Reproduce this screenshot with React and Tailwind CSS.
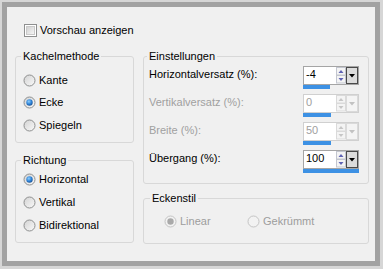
import React from "react";

function Checkbox() {
  return (
    <svg width="13" height="13" viewBox="0 0 13 13">
      <defs>
        <linearGradient id="cbg" x1="0" y1="0" x2="1" y2="1">
          <stop offset="0" stopColor="#cfcfcf" />
          <stop offset="1" stopColor="#f7f7f7" />
        </linearGradient>
      </defs>
      <rect x="0.5" y="0.5" width="12" height="12" fill="#fff" stroke="#8e8f8f" />
      <rect x="2.5" y="2.5" width="8" height="8" fill="url(#cbg)" stroke="#c9c9c9" />
    </svg>
  );
}

function Radio({ checked, disabled }) {
  return (
    <svg width="13" height="13" viewBox="0 0 13 13" className="shrink-0">
      <defs>
        <linearGradient id="rbg" x1="0" y1="0" x2="1" y2="1">
          <stop offset="0" stopColor="#d2d2d2" />
          <stop offset="1" stopColor="#fafafa" />
        </linearGradient>
        <radialGradient id="rdot" cx="0.4" cy="0.35" r="0.7">
          <stop offset="0" stopColor="#8fd0ff" />
          <stop offset="0.6" stopColor="#2a7fd4" />
          <stop offset="1" stopColor="#1c4f8e" />
        </radialGradient>
      </defs>
      <circle
        cx="6.5"
        cy="6.5"
        r="5.5"
        fill={disabled ? "#f2f2f2" : "url(#rbg)"}
        stroke={disabled ? "#c4c4c4" : "#8e8f8f"}
      />
      {checked && (
        <circle cx="6.5" cy="6.5" r="3.2" fill={disabled ? "#a9a9a9" : "url(#rdot)"} />
      )}
    </svg>
  );
}

function RadioItem({ label, checked, disabled, className = "" }) {
  return (
    <div className={`flex items-center gap-[3px] ${className}`}>
      <Radio checked={checked} disabled={disabled} />
      <span className={disabled ? "text-[#9d9d9d]" : "text-black"}>{label}</span>
    </div>
  );
}

function Group({ title, className = "", children }) {
  return (
    <fieldset className={`border border-[#d8d8d8] rounded-[3px] ${className}`}>
      <legend className="px-[2px] leading-[13px] text-black">{title}</legend>
      {children}
    </fieldset>
  );
}

function Spinner({ value, bar, disabled }) {
  const arrow = disabled ? "#c6c6c6" : "#5e62b4";
  return (
    <div className="w-[56px] flex flex-col">
      <div
        className={`flex h-[19px] border bg-white ${
          disabled ? "border-[#d0d0d0] text-[#a0a0a0]" : "border-[#a5a5a5]"
        }`}
      >
        <span className="flex-1 pl-[2px] pt-[1px]">{value}</span>
        <svg width="10" height="17" viewBox="0 0 10 17">
          <rect x="0.5" y="0.5" width="9" height="7.5" fill="#f4f4f4" stroke={disabled ? "#dadada" : "#c3c6cf"} />
          <rect x="0.5" y="8.5" width="9" height="7.5" fill="#f4f4f4" stroke={disabled ? "#dadada" : "#c3c6cf"} />
          <polygon points="2.5,6 7.5,6 5,3" fill={arrow} />
          <polygon points="2.5,11 7.5,11 5,14" fill={arrow} />
        </svg>
        <svg width="12" height="17" viewBox="0 0 12 17">
          <rect
            x="0.5"
            y="0.5"
            width="11"
            height="16"
            fill={disabled ? "#f4f4f4" : "#dcdcdc"}
            stroke={disabled ? "#dadada" : "#4a4a4a"}
          />
          <polygon points="3,7 9,7 6,10.5" fill={disabled ? "#c2c2c2" : "#000"} />
        </svg>
      </div>
      <div className="h-[4px]">
        <div className={`h-full bg-[#3d91e4] ${bar}`} />
      </div>
    </div>
  );
}

function SpinRow({ label, value, bar, disabled }) {
  return (
    <div className="flex items-start h-[23px]">
      <span className={`flex-1 pl-[2px] mt-[2px] ${disabled ? "text-[#a0a0a0]" : ""}`}>
        {label}
      </span>
      <Spinner value={value} bar={bar} disabled={disabled} />
    </div>
  );
}

export default function App() {
  return (
    <div className="w-[383px] h-[269px] bg-[#d6d6d6] pt-[2px] pl-[2px] pr-[3px] pb-[3px] font-['Liberation_Sans',Arial,sans-serif] text-[11px] leading-[13px] text-black">
      <div className="h-full border-[5px] border-[#a2a2a2] bg-[#f0f0f0]">
        <div className="flex items-center gap-[3px] ml-[17px] mt-[17px] h-[13px]">
          <Checkbox />
          <span>Vorschau anzeigen</span>
        </div>

        <div className="flex mt-[13px] ml-[8px] gap-[9px]">
          <div className="flex flex-col w-[119px] gap-[11px]">
            <Group title="Kachelmethode" className="h-[93px] pl-[5px] pt-[6px]">
              <div className="flex flex-col pl-[2px]">
                <RadioItem label="Kante" className="h-[22.5px]" />
                <RadioItem label="Ecke" checked className="h-[22.5px]" />
                <RadioItem label="Spiegeln" className="h-[22.5px]" />
              </div>
            </Group>
            <Group title="Richtung" className="h-[89px] pl-[5px] pt-[1px]">
              <div className="flex flex-col pl-[2px]">
                <RadioItem label="Horizontal" checked className="h-[23px]" />
                <RadioItem label="Vertikal" className="h-[23px]" />
                <RadioItem label="Bidirektional" className="h-[23px]" />
              </div>
            </Group>
          </div>

          <div className="flex flex-col w-[226px] gap-[8px]">
            <Group title="Einstellungen" className="h-[134px] pl-[3px] pr-[9px] pt-[3px]">
              <div className="flex flex-col gap-[5px]">
                <SpinRow label="Horizontalversatz (%):" value="-4" bar="w-[27px]" />
                <SpinRow label="Vertikalversatz (%):" value="0" bar="w-[28px]" disabled />
                <SpinRow label="Breite (%):" value="50" bar="w-[28px]" disabled />
                <SpinRow label="Übergang (%):" value="100" bar="w-full" />
              </div>
            </Group>
            <Group title="Eckenstil" className="h-[52px] pl-[6px] pt-[8px]">
              <div className="flex items-center h-[16px] pl-[14px]">
                <RadioItem label="Linear" checked disabled className="w-[83px]" />
                <RadioItem label="Gekrümmt" disabled />
              </div>
            </Group>
          </div>
        </div>
      </div>
    </div>
  );
}
